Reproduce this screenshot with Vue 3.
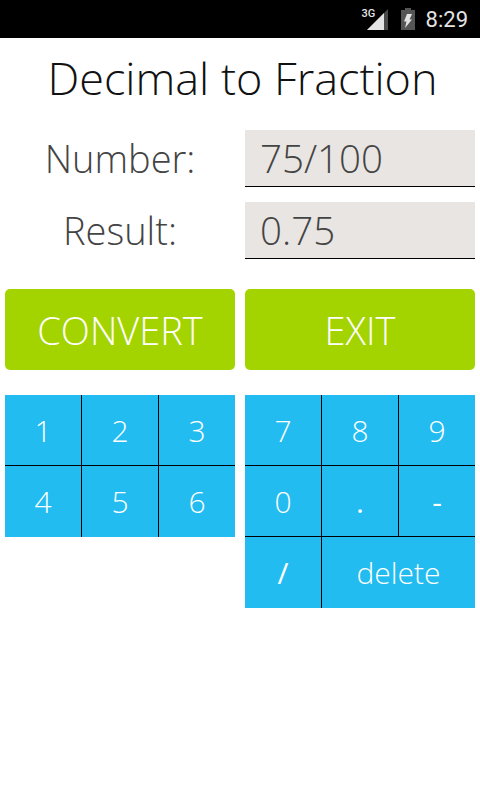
<template>
  <div class="screen">
    <!-- status bar -->
    <div class="status-bar">
      <div class="signal">
        <span class="net">3G</span>
        <svg width="21" height="21" viewBox="0 0 21 21">
          <path d="M0 21 L21 0 V21 Z" fill="#4a4a4a" />
          <path d="M0 21 L17 4 V21 Z" fill="#e4e4e4" />
        </svg>
      </div>
      <svg class="battery" width="14" height="22" viewBox="0 0 14 22">
        <path d="M4 0 H10 V2 H14 V22 H0 V2 H4 Z" fill="#555" />
        <path d="M6 6 H11 L8.5 11.5 H11 L4 20 L5.5 13.5 H3 Z" fill="#e4e4e4" />
      </svg>
      <span class="clock">8:29</span>
    </div>

    <h1 class="title">Decimal to Fraction</h1>

    <div class="form-row">
      <div class="label">Number:</div>
      <div class="field">75/100</div>
    </div>
    <div class="form-row">
      <div class="label">Result:</div>
      <div class="field">0.75</div>
    </div>

    <div class="actions">
      <button class="action">CONVERT</button>
      <button class="action">EXIT</button>
    </div>

    <div class="pads">
      <div class="pad">
        <button v-for="k in leftKeys" :key="k" class="key">{{ k }}</button>
      </div>
      <div class="pad">
        <button v-for="k in rightKeys" :key="k" class="key" :class="{ wide: k === 'delete', bold: k === '/' || k === '-' || k === '.' }">{{ k }}</button>
      </div>
    </div>
  </div>
</template>

<script setup>
const leftKeys = ['1', '2', '3', '4', '5', '6']
const rightKeys = ['7', '8', '9', '0', '.', '-', '/', 'delete']
</script>

<style scoped>
.screen {
  width: 480px;
  height: 800px;
  background: #fff;
  font-family: "Open Sans", "Liberation Sans", sans-serif;
  font-weight: 300;
  overflow: hidden;
}

.status-bar {
  height: 38px;
  background: #000;
  display: flex;
  align-items: center;
  justify-content: flex-end;
  padding-right: 12px;
  box-sizing: border-box;
}

.signal {
  position: relative;
  width: 21px;
  height: 21px;
  margin-right: 13px;
}

.net {
  position: absolute;
  left: -5px;
  top: -1px;
  font-size: 11px;
  line-height: 12px;
  font-weight: 500;
  color: #e4e4e4;
  font-family: "Roboto", sans-serif;
}

.signal svg {
  display: block;
}

.battery {
  margin-right: 11px;
}

.clock {
  color: #e4e4e4;
  font-family: "Roboto", sans-serif;
  font-size: 22px;
  font-weight: 400;
}

.title {
  margin: 0;
  height: 92px;
  line-height: 80px;
  text-align: center;
  font-size: 45px;
  font-weight: 300;
  color: #111;
  padding-left: 5px;
}

.form-row {
  display: flex;
  height: 57px;
  margin-bottom: 15px;
  padding: 0 5px;
}

.label {
  width: 230px;
  text-align: center;
  font-size: 38px;
  line-height: 57px;
  color: #444;
}

.field {
  margin-left: 10px;
  width: 230px;
  box-sizing: border-box;
  background: #e9e5e2;
  border-bottom: 1px solid #000;
  padding-left: 15px;
  font-size: 38.5px;
  line-height: 57px;
  color: #444;
}

.actions {
  display: flex;
  gap: 10px;
  padding: 0 5px;
  margin-top: 30px;
}

.action {
  width: 230px;
  height: 81px;
  border: none;
  border-radius: 5px;
  background: #a4d400;
  color: #fff;
  font-family: inherit;
  font-weight: 300;
  font-size: 38px;
  padding: 0;
}

.pads {
  display: grid;
  grid-template-columns: 230px 230px;
  column-gap: 10px;
  padding: 0 5px;
  margin-top: 25px;
  align-items: start;
}

.pad {
  display: grid;
  grid-template-columns: 77px 77px 76px;
  grid-auto-rows: 71px;
  background: #22bcf0;
  overflow: hidden;
}

.key {
  min-width: 0;
  border: none;
  border-right: 1px solid #000;
  border-bottom: 1px solid #000;
  background: #22bcf0;
  color: #fff;
  font-family: inherit;
  font-weight: 300;
  font-size: 30px;
  padding: 0;
}

.key:nth-child(3n) {
  border-right: none;
}

.pad:first-child .key:nth-child(n+4) {
  border-bottom: none;
}

.pad:last-child .key:nth-child(n+7) {
  border-bottom: none;
}

.key.wide {
  grid-column: span 2;
  border-right: none;
}

.key.bold {
  font-weight: 400;
}
</style>
